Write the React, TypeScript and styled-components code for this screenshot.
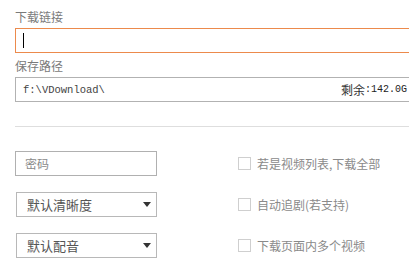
import { Fragment } from 'react'
import styled, { createGlobalStyle } from 'styled-components'

const GlobalStyle = createGlobalStyle`
  html, body {
    margin: 0;
    padding: 0;
    background: #fff;
    overflow: hidden;
  }
  body {
    font-family: 'Noto Sans CJK SC', 'Liberation Sans', sans-serif;
  }
`

const Page = styled.div`
  width: 409px;
  height: 274px;
  padding: 9px 0 0 15px;
  box-sizing: border-box;
  overflow: hidden;
`

const Label = styled.div<{ $gap?: number }>`
  height: 16px;
  line-height: 16px;
  font-size: 12px;
  color: #7a7a7a;
  margin-top: ${(p) => p.$gap ?? 0}px;
  margin-bottom: 3px;
`

const Field = styled.div<{ $focus?: boolean }>`
  width: 400px;
  height: 25px;
  box-sizing: border-box;
  border: 1px solid ${(p) => (p.$focus ? '#ec8a4c' : '#b2b2b2')};
  display: flex;
  align-items: center;
  padding-left: 7px;
  background: #fff;
`

const Caret = styled.span`
  width: 1px;
  height: 15px;
  background: #000;
`

const PathText = styled.span`
  font-family: 'Liberation Mono', monospace;
  font-size: 10.5px;
  color: #444;
  flex: 1;
`

const Remain = styled.span`
  margin-right: 7px;
  font-size: 12px;
  color: #333;
  display: flex;
  align-items: center;
`

const Mono = styled.span`
  font-family: 'Liberation Mono', monospace;
  font-size: 10px;
  color: #222;
`

const Divider = styled.div`
  height: 1px;
  background: #dedede;
  margin-top: 24px;
`

const Options = styled.div`
  display: grid;
  grid-template-columns: 142px auto;
  column-gap: 81px;
  row-gap: 16px;
  margin-top: 24px;
`

const TextBox = styled.div`
  height: 25px;
  box-sizing: border-box;
  border: 1px solid #b0b0b0;
  display: flex;
  align-items: center;
  padding-left: 9px;
  font-size: 12px;
  color: #8a8a8a;
`

const Select = styled.div`
  height: 25px;
  margin-left: 1px;
  box-sizing: border-box;
  border: 1px solid #b8b8b8;
  display: flex;
  align-items: center;
  justify-content: space-between;
  padding: 0 5px 0 10px;
  font-size: 13px;
  color: #555;
`

const Arrow = styled.span`
  width: 0;
  height: 0;
  border-left: 4px solid transparent;
  border-right: 4px solid transparent;
  border-top: 5px solid #333;
`

const Check = styled.label`
  display: flex;
  align-items: center;
  gap: 6px;
  font-size: 12px;
  color: #8a8a8a;
  white-space: nowrap;
  overflow: hidden;
  max-width: 142px;
`

const Box = styled.span`
  width: 13px;
  height: 13px;
  box-sizing: border-box;
  border: 1px solid #cfcfcf;
  background: #fff;
  flex: none;
`

const rows = [
  { key: 'pwd', left: <TextBox>密码</TextBox>, label: '若是视频列表,下载全部' },
  {
    key: 'quality',
    left: (
      <Select>
        默认清晰度
        <Arrow />
      </Select>
    ),
    label: '自动追剧(若支持)',
  },
  {
    key: 'audio',
    left: (
      <Select>
        默认配音
        <Arrow />
      </Select>
    ),
    label: '下载页面内多个视频',
  },
]

export default function App() {
  return (
    <>
      <GlobalStyle />
      <Page>
        <Label>下载链接</Label>
        <Field $focus>
          <Caret />
        </Field>
        <Label $gap={5}>保存路径</Label>
        <Field>
          <PathText>f:\VDownload\</PathText>
          <Remain>
            剩余<Mono>:142.0G</Mono>
          </Remain>
        </Field>
        <Divider />
        <Options>
          {rows.map((r) => (
            <Fragment key={r.key}>
              {r.left}
              <Check>
                <Box />
                {r.label}
              </Check>
            </Fragment>
          ))}
        </Options>
      </Page>
    </>
  )
}
